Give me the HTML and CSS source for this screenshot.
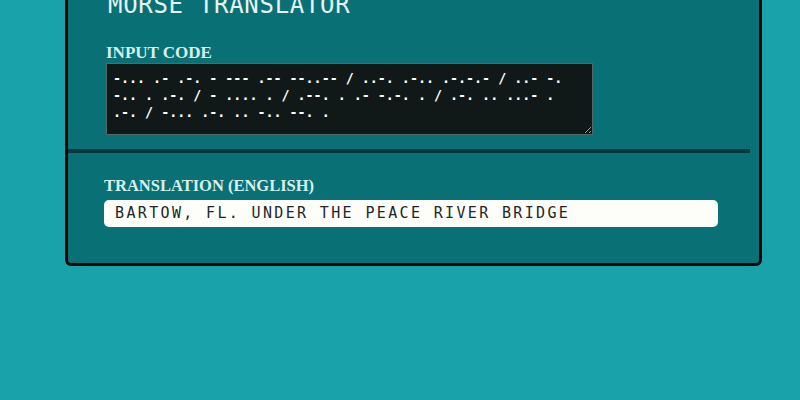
FILE: index.html
```html
<!DOCTYPE html>
<html lang="en">
<head>
<meta charset="utf-8">
<title>Morse Translator</title>
<link rel="stylesheet" href="styles.css">
</head>
<body>
<div class="panel">
  <div class="input-section">
    <h1 class="title">MORSE TRANSLATOR</h1>
    <label class="label" for="code">INPUT CODE</label>
    <textarea id="code" class="code" spellcheck="false">-... .- .-. - --- .-- --..-- / ..-. .-.. .-.-.- / ..- -. -.. . .-. / - .... . / .--. . .- -.-. . / .-. .. ...- . .-. / -... .-. .. -.. --. .</textarea>
  </div>
  <div class="output-section">
    <div class="label">TRANSLATION (ENGLISH)</div>
    <div class="output">BARTOW, FL. UNDER THE PEACE RIVER BRIDGE</div>
  </div>
</div>
</body>
</html>
```
FILE: styles.css
```css
html, body {
  margin: 0;
  padding: 0;
  background: #1aa2ab;
  overflow: hidden;
}
body {
  height: 400px;
}
.panel {
  box-sizing: border-box;
  width: 697px;
  margin: -32px 0 0 65px;
  background: #097175;
  border: 3px solid #050808;
  border-radius: 6px;
}
.input-section {
  padding: 20px 0 14px 38px;
  margin-right: 9px;
  border-bottom: 4px solid #063a3e;
}
.title {
  margin: 0 0 24px 2px;
  font-family: "DejaVu Sans Mono", monospace;
  font-weight: normal;
  font-size: 24px;
  line-height: 28px;
  letter-spacing: 0.7px;
  color: #e6f3f1;
}
.label {
  display: block;
  font-family: "Liberation Serif", serif;
  font-weight: bold;
  font-size: 17px;
  line-height: 20px;
  color: #d7efec;
}
.code {
  display: block;
  box-sizing: border-box;
  width: 487px;
  height: 72px;
  margin: 0;
  padding: 6px 6px 4px;
  background: #111918;
  border: 1px solid #52696b;
  color: #ffffff;
  font-family: "DejaVu Sans Mono", monospace;
  font-weight: bold;
  font-size: 13.333px;
  line-height: 17px;
  resize: both;
  outline: none;
}
.output-section {
  padding: 23px 41px 36px 36px;
}
.output-section .label {
  font-size: 16.5px;
  margin-bottom: 4px;
}
.output {
  box-sizing: border-box;
  height: 27px;
  padding: 0 11px;
  background: #fdfefa;
  border-radius: 5px;
  font-family: "DejaVu Sans Mono", monospace;
  font-size: 15px;
  line-height: 27px;
  letter-spacing: 2.35px;
  color: #242626;
  white-space: nowrap;
}
```
